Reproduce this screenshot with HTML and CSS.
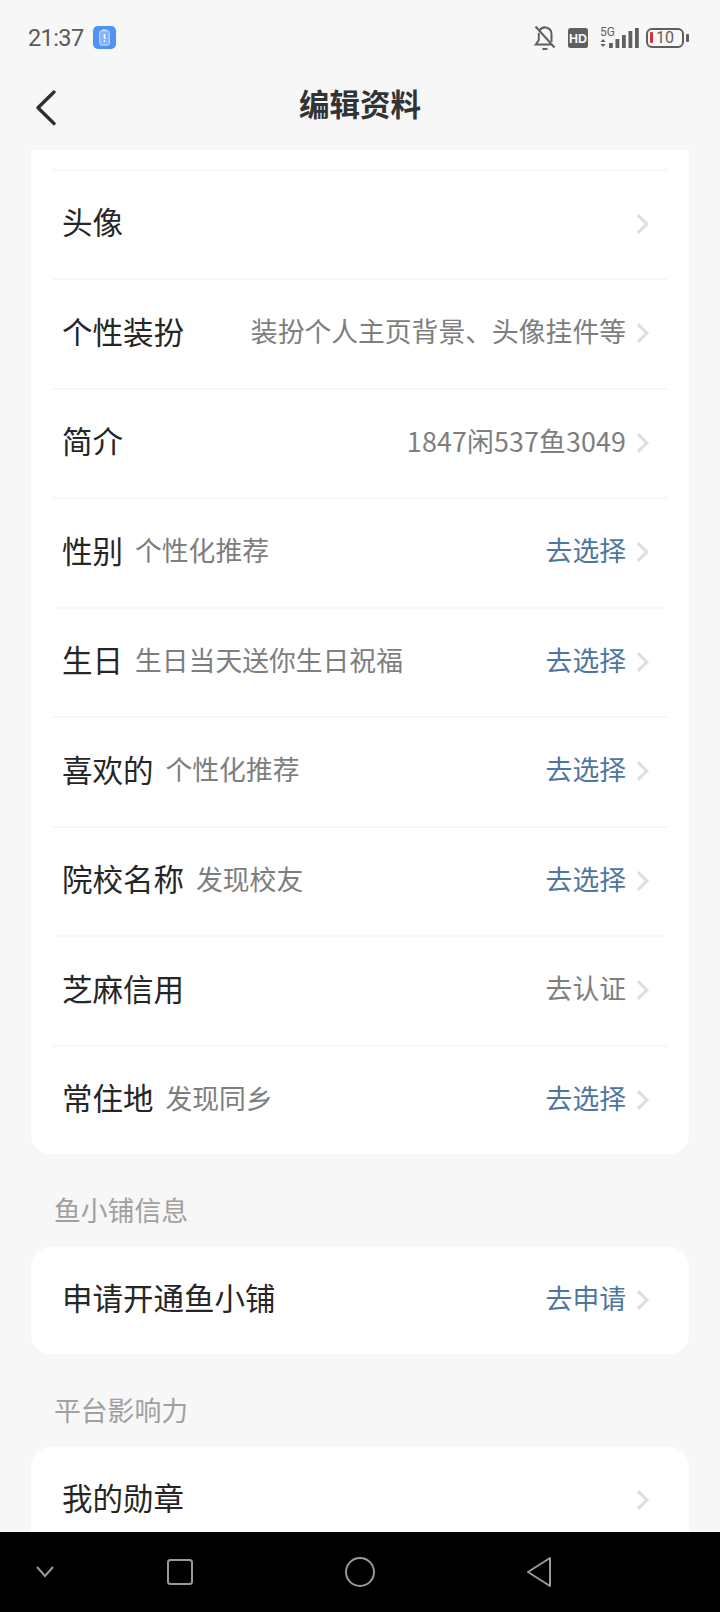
FILE: index.html
```html
<!DOCTYPE html>
<html lang="zh-CN">
<head>
  <meta charset="UTF-8">
  <title>编辑资料</title>
  <link rel="stylesheet" href="styles.css">
</head>
<body>
  <div class="phone">
    <div class="status-bar">
      <div class="status-left">
        <span class="clock">21:37</span>
        <svg class="app-badge" width="23" height="23" viewBox="0 0 24 24">
          <rect width="24" height="24" rx="5" fill="#4f94f3"/>
          <rect x="7" y="5" width="10" height="15" rx="2" fill="#82b4f7" stroke="#cfe2fc" stroke-width="1"/>
          <rect x="9.500" y="3.600" width="5" height="1.600" fill="#cfe2fc"/>
          <rect x="11.200" y="8.500" width="1.600" height="5" fill="#fff"/>
          <rect x="11.200" y="15" width="1.600" height="1.600" fill="#fff"/>
        </svg>
      </div>
      <div class="status-right">
        <svg width="24" height="26" viewBox="0 0 24 26" fill="none" stroke="#5f5f5f" stroke-width="2">
          <path d="M6.500 5.500A6.500 6.500 0 0 1 18.500 9v8"/>
          <path d="M5.800 8v7l-3 4.500h16"/>
          <path d="M2.500 1.500l19 21"/>
          <path d="M9.500 24h5"/>
        </svg>
        <svg class="ic-hd" width="20" height="20" viewBox="0 0 20 20">
          <rect width="20" height="20" rx="2.500" fill="#5f5f5f"/>
          <text x="10" y="14.500" text-anchor="middle" class="hd-text">HD</text>
        </svg>
        <svg class="ic-signal" width="40" height="28" viewBox="0 -3 40 28" fill="#5f5f5f">
          <text x="1" y="8.500" class="net-text">5G</text>
          <path d="M4 12l2.500 3h-5zM4 20l-2.500-3h5z"/>
          <rect x="10" y="16" width="3.800" height="5"/>
          <rect x="16.500" y="12" width="3.800" height="9"/>
          <rect x="23" y="8" width="3.800" height="13"/>
          <rect x="29.500" y="4" width="3.800" height="17"/>
          <rect x="36" y="1" width="3.800" height="20"/>
        </svg>
        <div class="battery">
          <div class="battery-body">
            <i class="battery-level"></i>
            <span class="battery-num">10</span>
          </div>
          <i class="battery-tip"></i>
        </div>
      </div>
    </div>

    <div class="header">
      <svg class="back" width="26" height="42" viewBox="0 0 26 42" fill="none" stroke="#2f2f2f" stroke-width="3.400" stroke-linecap="round" stroke-linejoin="round">
        <path d="M21 5L5 20.750 21 36.500"/>
      </svg>
      <span class="title">编辑资料</span>
    </div>

    <div class="content">
      <div class="card card-top">
        <div class="row">
          <span class="name">头像</span>
          <span class="value"></span>
          <i class="chevron"></i>
        </div>
        <div class="row">
          <span class="name">个性装扮</span>
          <span class="value">装扮个人主页背景、头像挂件等</span>
          <i class="chevron"></i>
        </div>
        <div class="row">
          <span class="name">简介</span>
          <span class="value num">1847闲537鱼3049</span>
          <i class="chevron"></i>
        </div>
        <div class="row">
          <span class="name">性别</span>
          <span class="hint">个性化推荐</span>
          <span class="value link">去选择</span>
          <i class="chevron"></i>
        </div>
        <div class="row">
          <span class="name">生日</span>
          <span class="hint">生日当天送你生日祝福</span>
          <span class="value link">去选择</span>
          <i class="chevron"></i>
        </div>
        <div class="row">
          <span class="name">喜欢的</span>
          <span class="hint">个性化推荐</span>
          <span class="value link">去选择</span>
          <i class="chevron"></i>
        </div>
        <div class="row">
          <span class="name">院校名称</span>
          <span class="hint">发现校友</span>
          <span class="value link">去选择</span>
          <i class="chevron"></i>
        </div>
        <div class="row">
          <span class="name">芝麻信用</span>
          <span class="value">去认证</span>
          <i class="chevron"></i>
        </div>
        <div class="row">
          <span class="name">常住地</span>
          <span class="hint">发现同乡</span>
          <span class="value link">去选择</span>
          <i class="chevron"></i>
        </div>
      </div>

      <div class="section-label">鱼小铺信息</div>
      <div class="card">
        <div class="row solo">
          <span class="name">申请开通鱼小铺</span>
          <span class="value link">去申请</span>
          <i class="chevron"></i>
        </div>
      </div>

      <div class="section-label">平台影响力</div>
      <div class="card">
        <div class="row solo">
          <span class="name">我的勋章</span>
          <span class="value"></span>
          <i class="chevron"></i>
        </div>
      </div>
    </div>

    <div class="nav-bar">
      <svg width="20" height="14" viewBox="0 0 20 14" fill="none" stroke="#9a9a9a" stroke-width="2">
        <path d="M2 2l8 9 8-9"/>
      </svg>
      <svg class="nav-square" width="30" height="30" viewBox="0 0 30 30" fill="none" stroke="#9a9a9a" stroke-width="2">
        <rect x="3" y="3" width="24" height="24" rx="2.500"/>
      </svg>
      <svg class="nav-circle" width="32" height="32" viewBox="0 0 32 32" fill="none" stroke="#9a9a9a" stroke-width="2">
        <circle cx="16" cy="16" r="14"/>
      </svg>
      <svg class="nav-back" width="28" height="32" viewBox="0 0 28 32" fill="none" stroke="#9a9a9a" stroke-width="2" stroke-linejoin="round">
        <path d="M25 2v28L3 16z"/>
      </svg>
    </div>
  </div>
</body>
</html>
```

FILE: styles.css
```css
* {
  box-sizing: border-box;
}
body {
  margin: 0;
  background: #f7f7f7;
  font-family: "Noto Sans CJK SC", "Noto Sans", sans-serif;
}
.phone {
  width: 720px;
  height: 1612px;
  display: flex;
  flex-direction: column;
  overflow: hidden;
  background: #f7f7f7;
}

/* status bar */
.status-bar {
  height: 72px;
  flex: none;
  padding: 3px 31px 0 28px;
  display: flex;
  justify-content: space-between;
  align-items: center;
}
.status-left {
  display: flex;
  align-items: center;
  gap: 9px;
}
.clock {
  font-family: Roboto, sans-serif;
  font-size: 23.500px;
  letter-spacing: -0.600px;
  color: #5a5a5a;
}
.status-right {
  display: flex;
  align-items: center;
}
.ic-hd {
  margin-left: 11px;
}
.hd-text {
  font-family: "Liberation Sans", sans-serif;
  font-size: 12.500px;
  font-weight: 700;
  fill: #f7f7f7;
}
.ic-signal {
  margin-left: 11px;
}
.net-text {
  font-family: Roboto, sans-serif;
  font-size: 12px;
}
.battery {
  display: flex;
  align-items: center;
  margin-left: 7px;
}
.battery-body {
  width: 38px;
  height: 20px;
  border: 2px solid #5f5f5f;
  border-radius: 6px;
  display: flex;
  align-items: center;
  padding-left: 2px;
}
.battery-level {
  display: block;
  width: 3px;
  height: 11px;
  background: #d9303e;
  border-radius: 1px;
}
.battery-num {
  font-family: Roboto, sans-serif;
  font-size: 16px;
  line-height: 16px;
  color: #5f5f5f;
  margin-left: 3px;
}
.battery-tip {
  display: block;
  width: 3px;
  height: 8px;
  margin-left: 2px;
  background: #5f5f5f;
  border-radius: 1px;
}

/* header */
.header {
  height: 78px;
  flex: none;
  display: flex;
  align-items: center;
  justify-content: center;
  position: relative;
}
.back {
  position: absolute;
  left: 33px;
  top: 15px;
}
.title {
  font-size: 30.500px;
  font-weight: 700;
  color: #333;
  line-height: 1;
  margin-bottom: 15px;
}

/* list */
.content {
  flex: 1;
  min-height: 0;
  overflow: hidden;
  padding: 0 31px;
}
.card {
  background: #fff;
  border-radius: 20px;
  padding: 0 22px;
}
.card-top {
  border-radius: 0 0 20px 20px;
  padding-top: 18.500px;
}
.row {
  height: 109.500px;
  display: flex;
  align-items: center;
  border-top: 2px solid #f7f7f7;
  padding: 0 21px 6px 9px;
}
.solo {
  height: 107.500px;
  border-top: none;
}
.name {
  font-size: 30.500px;
  color: #262626;
}
.hint {
  font-size: 26.800px;
  color: #7e7e7e;
  margin-left: 12px;
}
.value {
  margin-left: auto;
  font-size: 26.800px;
  color: #7e7e7e;
}
.num {
  letter-spacing: 0.150px;
}
.link {
  color: #4d76a1;
}
.chevron {
  display: block;
  flex: none;
  width: 14px;
  height: 14px;
  margin: 5px 0 0 6px;
  border-top: 3.500px solid #dedede;
  border-right: 3.500px solid #dedede;
  transform: rotate(45deg);
}
.section-label {
  height: 92.500px;
  padding: 36px 0 0 23px;
  font-size: 26.800px;
  line-height: 40px;
  color: #a0a0a0;
}

/* bottom nav */
.nav-bar {
  height: 80px;
  flex: none;
  background: #000;
  display: flex;
  align-items: center;
  padding-left: 35px;
}
.nav-square {
  margin-left: 110px;
}
.nav-circle {
  margin-left: 149px;
}
.nav-back {
  margin-left: 149px;
}
```
